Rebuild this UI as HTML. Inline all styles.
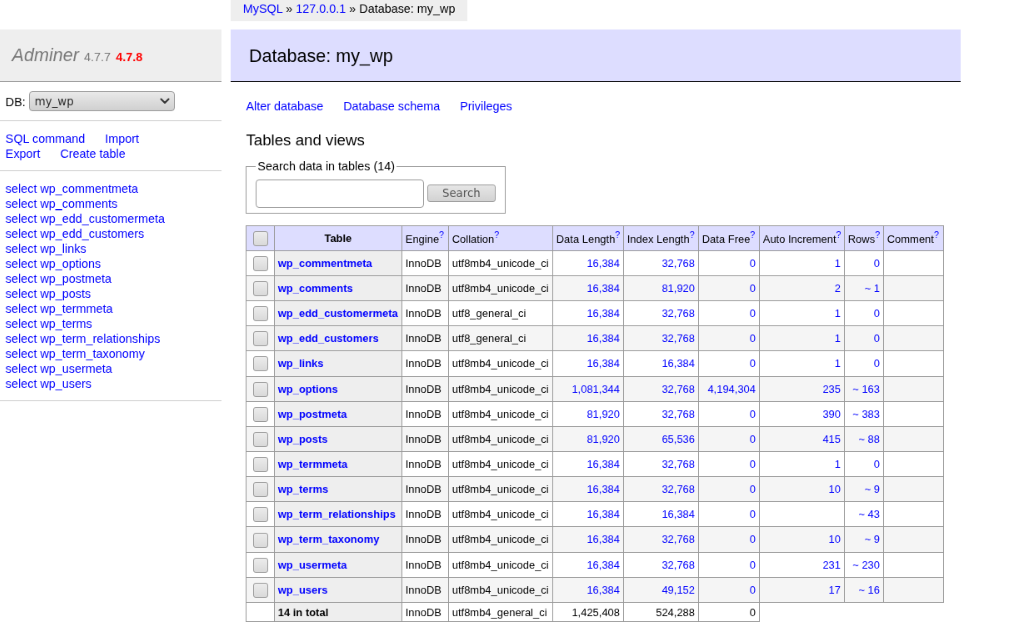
<!DOCTYPE html>
<html lang="en">
<head>
<meta charset="utf-8">
<title>Database: my_wp - 127.0.0.1 - Adminer</title>
<style>
html { margin: 0; padding: 0; background: #fff; overflow: hidden; }
body { margin: 0; padding: 0; background: #fff; overflow: hidden; width: 1024px; height: 629px; position: relative; }
#page { position: absolute; left: -6px; top: -3px; width: 1260px; height: 790px; transform: scale(0.83333); transform-origin: 0 0; will-change: transform; color: #000; background: #fff; font: 14.4px/1.25 "Liberation Sans", sans-serif; }
a { color: blue; text-decoration: none; }
h1 { font-size: 150%; margin: 0; padding: calc(.8em + 1px) 1em .8em; border-bottom: 1px solid #999; font-weight: normal; color: #777; background: #eee; }
h2 { font-size: 150%; margin: 0 0 20px -18px; padding: calc(.8em + 1.6px) 1em calc(.8em - .6px); border-bottom: 1px solid #000; color: #000; font-weight: normal; background: #ddf; }
h3 { font-weight: normal; font-size: 130%; margin: calc(1em + 1px) 0 0; }
form { margin: 0; }
table { margin: calc(1em + 0.3px) 20px 0 0; border-collapse: collapse; font-size: 90%; table-layout: fixed; width: 837px; }
td, th { border: 1px solid #999; padding: calc(.2em + .5px) .3em calc(.2em - .5px); }
th { background: #eee; text-align: left; }
thead th { text-align: center; padding: calc(.2em + 2.4px) .5em .2em; }
thead td, thead th { background: #ddf; }
fieldset { display: inline-block; vertical-align: top; padding: .5em calc(.8em - .7px) calc(.5em - 1px) calc(.8em - .6px); margin: .8em .5em 0 0; border: 1px solid #999; min-width: 0; }
p { margin: .8em 20px 0 0; }
.version { color: #777; font-size: 67%; }
.nowrap td, .nowrap th { white-space: pre; }
.wrap td { white-space: nowrap; }
.odd td { background: #F5F5F5; }
.number { text-align: right; }
.links a { white-space: nowrap; margin-right: 20px; }
#menu { position: absolute; margin: 10px 0 0; padding: 0 0 30px 0; top: 2em; left: 0; width: calc(19em - .6px); }
#menu p, #tables { padding: calc(.8em + 1px) 1em calc(.8em - 1px) calc(1em - .6px); margin: 0; border-bottom: 1px solid #ccc; }
#tables li { list-style: none; }
#dbs { overflow: hidden; height: 22.6px; line-height: 22.6px; }
#tables { white-space: nowrap; overflow: hidden; }
#content { margin: 2em 0 0 21em; padding: 10px 20px 20px 0; width: -moz-fit-content; width: fit-content; }
#breadcrumb { white-space: nowrap; position: absolute; top: 0; left: 21em; background: #eee; height: calc(2em - 1.6px); padding-top: 1.6px !important; line-height: 1.8em; padding: 0 1em; margin: 0 0 0 -18px; }
#h1 { color: #777; text-decoration: none; font-style: italic; }
#version { font-size: 67%; color: red; font-weight: bold; }
sup { font-size: 83%; position: relative; top: -0.8px; }
.cb { display: inline-block; box-sizing: border-box; width: 18px; height: 18px; border: 1px solid #9b9b9b; border-radius: 3px; background: linear-gradient(#ececec, #d9d9d9); vertical-align: middle; margin: 3px 3px 3px 4px; }
.inp { display: block; box-sizing: border-box; width: 202px; height: 33.7px; margin-top: -0.7px; border: 1px solid #999; border-radius: 4px; background: #fff; }
.btn { display: block; box-sizing: border-box; position: relative; top: -1px; margin-left: 3.3px; width: 82.5px; height: 21px; text-align: center; font: 13.33px/19px "DejaVu Sans", "Liberation Sans", sans-serif; color: #555; background: linear-gradient(#e6e6e6, #d2d2d2); border: 1px solid #9c9c9c; border-radius: 3px; padding: 0; }
.sel { display: inline-block; box-sizing: border-box; vertical-align: middle; position: relative; top: -2px; width: 175px; height: 23.2px; color: #2a2a2a; border: 1px solid #999; border-radius: 4px; background: linear-gradient(#e9e9e9, #d0d0d0); font: 13.33px "DejaVu Sans", "Liberation Sans", sans-serif; }
.selt { position: absolute; left: 6px; top: 3.6px; }
.chev { position: absolute; right: 4.5px; top: 6.6px; }
tbody tr, thead tr { height: 30px; }
fieldset > div { display: flex; align-items: center; }
legend { position: relative; top: -1px; }
tfoot tr { height: 23px; }
tfoot td, tfoot th { padding-top: calc(.2em + 1px); padding-bottom: calc(.2em - 1px); }
</style>
</head>
<body>
<div id="page">
<div id="content">
<p id="breadcrumb"><a href="#">MySQL</a> &raquo; <a href="#">127.0.0.1</a> &raquo; Database: my_wp</p>
<h2>Database: my_wp</h2>
<p class="links"><a href="#">Alter database</a>
<a href="#">Database schema</a>
<a href="#">Privileges</a></p>
<h3 id="tables-views">Tables and views</h3>
<form>
<fieldset><legend>Search data in tables <span id="selected2">(14)</span></legend><div><span class="inp search"></span><span class="btn">Search</span></div></fieldset>
<div class="scrollable">
<table cellspacing="0" class="nowrap checkable">
<colgroup><col style="width:33.5px"><col style="width:153px"><col style="width:56px"><col style="width:125px"><col style="width:85px"><col style="width:90px"><col style="width:73px"><col style="width:102px"><col style="width:47px"><col style="width:72.5px"></colgroup>
<thead><tr class="wrap"><td><span class="cb"></span></td><th>Table</th><td>Engine<a href="#"><sup>?</sup></a></td><td>Collation<a href="#"><sup>?</sup></a></td><td>Data Length<a href="#"><sup>?</sup></a></td><td>Index Length<a href="#"><sup>?</sup></a></td><td>Data Free<a href="#"><sup>?</sup></a></td><td>Auto Increment<a href="#"><sup>?</sup></a></td><td>Rows<a href="#"><sup>?</sup></a></td><td>Comment<a href="#"><sup>?</sup></a></td></tr></thead>
<tbody>
<tr><td><span class="cb"></span></td><th><a href="#">wp_commentmeta</a></th><td>InnoDB</td><td>utf8mb4_unicode_ci</td><td class="number"><a href="#">16,384</a></td><td class="number"><a href="#">32,768</a></td><td class="number"><a href="#">0</a></td><td class="number"><a href="#">1</a></td><td class="number"><a href="#">0</a></td><td></td></tr>
<tr class="odd"><td><span class="cb"></span></td><th><a href="#">wp_comments</a></th><td>InnoDB</td><td>utf8mb4_unicode_ci</td><td class="number"><a href="#">16,384</a></td><td class="number"><a href="#">81,920</a></td><td class="number"><a href="#">0</a></td><td class="number"><a href="#">2</a></td><td class="number"><a href="#">~ 1</a></td><td></td></tr>
<tr><td><span class="cb"></span></td><th><a href="#">wp_edd_customermeta</a></th><td>InnoDB</td><td>utf8_general_ci</td><td class="number"><a href="#">16,384</a></td><td class="number"><a href="#">32,768</a></td><td class="number"><a href="#">0</a></td><td class="number"><a href="#">1</a></td><td class="number"><a href="#">0</a></td><td></td></tr>
<tr class="odd"><td><span class="cb"></span></td><th><a href="#">wp_edd_customers</a></th><td>InnoDB</td><td>utf8_general_ci</td><td class="number"><a href="#">16,384</a></td><td class="number"><a href="#">32,768</a></td><td class="number"><a href="#">0</a></td><td class="number"><a href="#">1</a></td><td class="number"><a href="#">0</a></td><td></td></tr>
<tr><td><span class="cb"></span></td><th><a href="#">wp_links</a></th><td>InnoDB</td><td>utf8mb4_unicode_ci</td><td class="number"><a href="#">16,384</a></td><td class="number"><a href="#">16,384</a></td><td class="number"><a href="#">0</a></td><td class="number"><a href="#">1</a></td><td class="number"><a href="#">0</a></td><td></td></tr>
<tr class="odd"><td><span class="cb"></span></td><th><a href="#">wp_options</a></th><td>InnoDB</td><td>utf8mb4_unicode_ci</td><td class="number"><a href="#">1,081,344</a></td><td class="number"><a href="#">32,768</a></td><td class="number"><a href="#">4,194,304</a></td><td class="number"><a href="#">235</a></td><td class="number"><a href="#">~ 163</a></td><td></td></tr>
<tr><td><span class="cb"></span></td><th><a href="#">wp_postmeta</a></th><td>InnoDB</td><td>utf8mb4_unicode_ci</td><td class="number"><a href="#">81,920</a></td><td class="number"><a href="#">32,768</a></td><td class="number"><a href="#">0</a></td><td class="number"><a href="#">390</a></td><td class="number"><a href="#">~ 383</a></td><td></td></tr>
<tr class="odd"><td><span class="cb"></span></td><th><a href="#">wp_posts</a></th><td>InnoDB</td><td>utf8mb4_unicode_ci</td><td class="number"><a href="#">81,920</a></td><td class="number"><a href="#">65,536</a></td><td class="number"><a href="#">0</a></td><td class="number"><a href="#">415</a></td><td class="number"><a href="#">~ 88</a></td><td></td></tr>
<tr><td><span class="cb"></span></td><th><a href="#">wp_termmeta</a></th><td>InnoDB</td><td>utf8mb4_unicode_ci</td><td class="number"><a href="#">16,384</a></td><td class="number"><a href="#">32,768</a></td><td class="number"><a href="#">0</a></td><td class="number"><a href="#">1</a></td><td class="number"><a href="#">0</a></td><td></td></tr>
<tr class="odd"><td><span class="cb"></span></td><th><a href="#">wp_terms</a></th><td>InnoDB</td><td>utf8mb4_unicode_ci</td><td class="number"><a href="#">16,384</a></td><td class="number"><a href="#">32,768</a></td><td class="number"><a href="#">0</a></td><td class="number"><a href="#">10</a></td><td class="number"><a href="#">~ 9</a></td><td></td></tr>
<tr><td><span class="cb"></span></td><th><a href="#">wp_term_relationships</a></th><td>InnoDB</td><td>utf8mb4_unicode_ci</td><td class="number"><a href="#">16,384</a></td><td class="number"><a href="#">16,384</a></td><td class="number"><a href="#">0</a></td><td class="number"></td><td class="number"><a href="#">~ 43</a></td><td></td></tr>
<tr class="odd"><td><span class="cb"></span></td><th><a href="#">wp_term_taxonomy</a></th><td>InnoDB</td><td>utf8mb4_unicode_ci</td><td class="number"><a href="#">16,384</a></td><td class="number"><a href="#">32,768</a></td><td class="number"><a href="#">0</a></td><td class="number"><a href="#">10</a></td><td class="number"><a href="#">~ 9</a></td><td></td></tr>
<tr><td><span class="cb"></span></td><th><a href="#">wp_usermeta</a></th><td>InnoDB</td><td>utf8mb4_unicode_ci</td><td class="number"><a href="#">16,384</a></td><td class="number"><a href="#">32,768</a></td><td class="number"><a href="#">0</a></td><td class="number"><a href="#">231</a></td><td class="number"><a href="#">~ 230</a></td><td></td></tr>
<tr class="odd"><td><span class="cb"></span></td><th><a href="#">wp_users</a></th><td>InnoDB</td><td>utf8mb4_unicode_ci</td><td class="number"><a href="#">16,384</a></td><td class="number"><a href="#">49,152</a></td><td class="number"><a href="#">0</a></td><td class="number"><a href="#">17</a></td><td class="number"><a href="#">~ 16</a></td><td></td></tr>
</tbody>
<tfoot><tr><td></td><th>14 in total</th><td>InnoDB</td><td>utf8mb4_general_ci</td><td class="number">1,425,408</td><td class="number">524,288</td><td class="number">0</td></tr></tfoot>
</table>
</div>
</form>
</div>
<div id="menu">
<h1><a href="#" id="h1">Adminer</a> <span class="version">4.7.7</span> <a href="#" id="version">4.7.8</a></h1>
<form><p id="dbs"><span title="database">DB</span>: <span class="sel"><span class="selt">my_wp</span><svg class="chev" viewBox="0 0 12 8" width="12" height="8"><path d="M1.5 1.5 L6 6 L10.5 1.5" fill="none" stroke="#333" stroke-width="2.1" stroke-linecap="round" stroke-linejoin="round"/></svg></span></p></form>
<p class="links"><a href="#">SQL command</a>
<a href="#">Import</a>
<a href="#">Export</a>
<a href="#">Create table</a></p>
<ul id="tables">
<li><a href="#" class="select">select</a> <a href="#" class="structure">wp_commentmeta</a></li>
<li><a href="#" class="select">select</a> <a href="#" class="structure">wp_comments</a></li>
<li><a href="#" class="select">select</a> <a href="#" class="structure">wp_edd_customermeta</a></li>
<li><a href="#" class="select">select</a> <a href="#" class="structure">wp_edd_customers</a></li>
<li><a href="#" class="select">select</a> <a href="#" class="structure">wp_links</a></li>
<li><a href="#" class="select">select</a> <a href="#" class="structure">wp_options</a></li>
<li><a href="#" class="select">select</a> <a href="#" class="structure">wp_postmeta</a></li>
<li><a href="#" class="select">select</a> <a href="#" class="structure">wp_posts</a></li>
<li><a href="#" class="select">select</a> <a href="#" class="structure">wp_termmeta</a></li>
<li><a href="#" class="select">select</a> <a href="#" class="structure">wp_terms</a></li>
<li><a href="#" class="select">select</a> <a href="#" class="structure">wp_term_relationships</a></li>
<li><a href="#" class="select">select</a> <a href="#" class="structure">wp_term_taxonomy</a></li>
<li><a href="#" class="select">select</a> <a href="#" class="structure">wp_usermeta</a></li>
<li><a href="#" class="select">select</a> <a href="#" class="structure">wp_users</a></li>
</ul>
</div>
</div>
</body>
</html>
